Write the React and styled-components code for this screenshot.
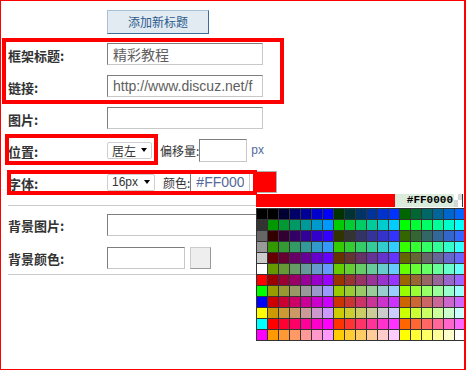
import React from 'react'
import styled, { createGlobalStyle } from 'styled-components'

const Global = createGlobalStyle`
  html, body {
    margin: 0;
    padding: 0;
    background: #fff;
  }
  body {
    font-family: "Liberation Sans", "Noto Sans CJK SC", sans-serif;
    color: #333;
  }
  input {
    outline: none;
  }
`

const Frame = styled.div`
  position: relative;
  box-sizing: border-box;
  width: 466px;
  height: 370px;
  border: 1px solid #ff0000;
  border-right-width: 2px;
  padding-left: 7px;
  overflow: hidden;
  background: #fff;
`

const ButtonRow = styled.div`
  display: flex;
  padding: 9px 0 4px 99px;
`

const AddButton = styled.button`
  box-sizing: border-box;
  width: 102px;
  height: 24px;
  padding: 0;
  background: #e2eaf2;
  border: 1px solid;
  border-color: #a8c2da #3b6c9c #3b6c9c #a8c2da;
  color: #2c5b8d;
  font-family: "Noto Sans CJK SC", sans-serif;
  font-size: 12px;
  line-height: 22px;
`

const Row = styled.div`
  display: flex;
  align-items: center;
  height: ${p => p.$h || 32}px;
`

const Label = styled.div`
  flex: none;
  width: 99px;
  padding-top: 2px;
  font-family: "Noto Sans CJK SC", sans-serif;
  font-size: 13px;
  font-weight: bold;
  color: #333;
`

const TextInput = styled.input`
  box-sizing: border-box;
  width: ${p => p.$w || 156}px;
  height: ${p => p.$h || 22}px;
  margin: 0;
  padding: 0 5px;
  border: 1px solid;
  border-color: #7e7e7e #c8c8c8 #c8c8c8 #7e7e7e;
  background: #fff;
  font-family: "Liberation Sans", "Noto Sans CJK SC", sans-serif;
  font-size: 14px;
  color: ${p => p.$tone || '#5e5e5e'};
`

const FakeSelect = styled.div`
  box-sizing: border-box;
  display: flex;
  align-items: center;
  justify-content: space-between;
  width: ${p => p.$w}px;
  height: 17px;
  padding: 0 4px;
  border: 1px solid #cfcfcf;
  border-radius: 2px;
  background: #fff;
  font-family: "Liberation Sans", "Noto Sans CJK SC", sans-serif;
  font-size: 12px;
  color: #333;
`

const Caret = styled.span`
  width: 0;
  height: 0;
  border-left: 3px solid transparent;
  border-right: 3px solid transparent;
  border-top: 4px solid #000;
`

const Inline = styled.span`
  margin-left: 8px;
  font-family: "Noto Sans CJK SC", sans-serif;
  font-size: 12px;
  color: #333;
`

const Unit = styled.span`
  margin-left: 4px;
  font-size: 12px;
  color: #4f6a99;
`

const Swatch = styled.div`
  box-sizing: border-box;
  width: 21px;
  height: 22px;
  margin-left: ${p => p.$gap || 6}px;
  background: ${p => p.$color};
  border: 1px solid;
  border-color: ${p => p.$border || '#b0b0b0'};
`

const Divider = styled.div`
  height: 1px;
  margin: ${p => p.$m || '0'};
  margin-right: 8px;
  background: #cccccc;
`

const Section = styled.div`
  padding-top: 2px;
`

const Mark = styled.div`
  position: absolute;
  left: ${p => p.$x}px;
  top: ${p => p.$y}px;
  width: ${p => p.$w}px;
  height: ${p => p.$h}px;
  box-sizing: border-box;
  border: 4px solid #ff0000;
  pointer-events: none;
`

const Picker = styled.div`
  position: absolute;
  left: 255px;
  top: 193px;
  width: 210px;
  background: #fff;
`

const PickerBar = styled.div`
  display: flex;
  width: 207px;
  height: 13px;
  border-right: 1px solid #333;
  box-sizing: border-box;
`

const Current = styled.div`
  flex: 1;
  background: #ff0000;
`

const Code = styled.div`
  width: 58px;
  padding-right: 1px;
  background: #dcecdc;
  font-family: "Liberation Mono", monospace;
  font-size: 11px;
  line-height: 13px;
  font-weight: bold;
  text-align: right;
  color: #000;
`

const NoColor = styled.div`
  width: 8px;
  background:
    linear-gradient(#fff, #fff) 0 0 / 4px 6px no-repeat,
    linear-gradient(#d6d6d6, #d6d6d6) 4px 0 / 4px 6px no-repeat,
    linear-gradient(#d6d6d6, #d6d6d6) 0 6px / 4px 7px no-repeat,
    #fff;
`

const Grid = styled.div`
  display: grid;
  grid-template-columns: repeat(19, 10px);
  grid-auto-rows: 10px;
  gap: 1px;
  width: fit-content;
  margin-top: 1px;
  padding: 1px;
  background: #333;
`

const Cell = styled.span.attrs(p => ({ style: { background: p.$c } }))`
  display: block;
`

const steps = ['00', '33', '66', '99', 'CC', 'FF']
const basics = ['000000', '333333', '666666', '999999', 'CCCCCC', 'FFFFFF', 'FF0000', '00FF00', '0000FF', 'FFFF00', '00FFFF', 'FF00FF']

const palette = basics.map((first, r) => [
  first,
  ...Array.from({ length: 18 }, (_, j) =>
    steps[Math.floor(r / 2)] + steps[Math.floor(j / 6) + (r % 2) * 3] + steps[j % 6]
  ),
])

const ColorPicker = () => (
  <Picker>
    <PickerBar>
      <Current />
      <Code>#FF0000</Code>
      <NoColor />
    </PickerBar>
    <Grid>
      {palette.flat().map((c, i) => <Cell key={i} $c={'#' + c} />)}
    </Grid>
  </Picker>
)

const App = () => (
  <>
    <Global />
    <Frame>
      <ButtonRow>
        <AddButton>添加新标题</AddButton>
      </ButtonRow>
      <Row>
        <Label>框架标题:</Label>
        <TextInput readOnly defaultValue="精彩教程" />
      </Row>
      <Row>
        <Label>链接:</Label>
        <TextInput readOnly defaultValue="http://www.discuz.net/f" />
      </Row>
      <Row>
        <Label>图片:</Label>
        <TextInput readOnly defaultValue="" />
      </Row>
      <Row>
        <Label>位置:</Label>
        <FakeSelect $w={45}>居左<Caret /></FakeSelect>
        <Inline>偏移量:</Inline>
        <TextInput readOnly defaultValue="" $w={48} $h={23} />
        <Unit>px</Unit>
      </Row>
      <Row>
        <Label>字体:</Label>
        <FakeSelect $w={48}>16px<Caret /></FakeSelect>
        <Inline>颜色:</Inline>
        <TextInput readOnly defaultValue="#FF0000" $w={60} $tone="#566a98" />
        <Swatch $color="#ff0000" />
      </Row>
      <Divider $m="7px 0 0" />
      <Section>
        <Row $h={33}>
          <Label>背景图片:</Label>
          <TextInput readOnly defaultValue="" />
        </Row>
        <Row $h={33}>
          <Label>背景颜色:</Label>
          <TextInput readOnly defaultValue="" $w={78} />
          <Swatch $color="#eeeeee" $gap={5} $border="#cccccc #999999 #999999 #cccccc" />
        </Row>
        <Divider />
      </Section>

      <Mark $x={1} $y={37} $w={282} $h={66} />
      <Mark $x={4} $y={133} $w={153} $h={31} />
      <Mark $x={6} $y={169} $w={250} $h={25} />

      <ColorPicker />
    </Frame>
  </>
)

export default App
